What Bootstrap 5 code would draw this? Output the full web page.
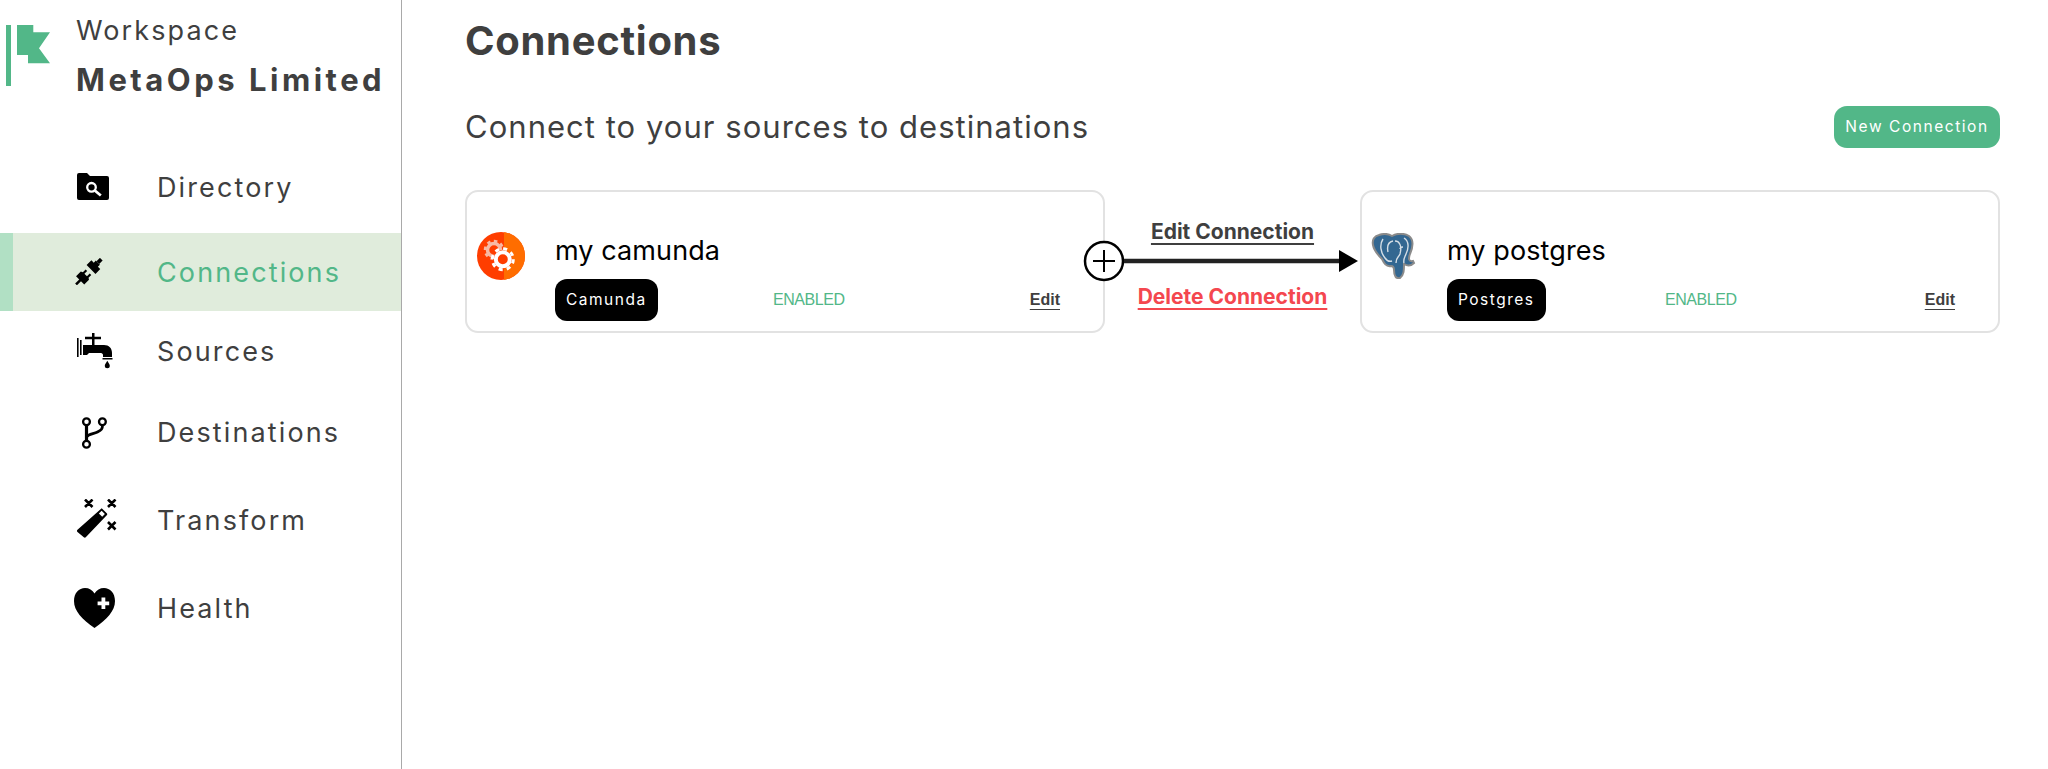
<!DOCTYPE html>
<html lang="en">
<head>
<meta charset="utf-8">
<title>Connections</title>
<link href="https://cdn.jsdelivr.net/npm/bootstrap@5.3.0/dist/css/bootstrap.min.css" rel="stylesheet">
<style>
html,body{height:769px;overflow:hidden;background:#fff}
body{font-family:Inter,"Liberation Sans",sans-serif;color:#3f3f3f}
.shell{height:769px}
.side{width:402px;flex:none;border-right:1px solid #a9a9a9;height:769px}
.brand{height:148px;padding:15px 0 0 6px}
.brand svg{margin-top:10px;flex:none}
.brand-txt{margin-left:26px}
.brand-a{font-size:27px;line-height:32px;letter-spacing:2.1px}
.brand-b{font-size:31px;line-height:37px;margin-top:14px;font-weight:700;letter-spacing:3.5px;white-space:nowrap}
.nav-row{display:flex;align-items:center;height:78px;font-size:27px;letter-spacing:2.12px;padding-left:74px}
.nav-row>span{padding-top:2px}
.ico-box{width:83px;flex:none;display:flex;align-items:center}
.on{background:#e0ecdc;color:#52b788;border-left:13px solid #b1e0c4;padding-left:61px;margin-top:7px}
.r-src{margin-top:1px}
.r-dst{margin-top:3px}
.r-trn{margin-top:10px}
.r-hlt{margin-top:10px}
.i-fold{margin-left:3px;margin-top:-1px}
.i-plug{margin-left:1px;margin-top:-1px}
.i-tap{margin-left:3px}
.i-fork{margin-left:7px;margin-top:1px}
.i-wand{margin-left:2px;margin-top:-3px}
.main{flex:1;padding:0 48px 0 63px;min-width:0}
.h-title{font-size:40px;font-weight:700;line-height:46px;margin:18px 0 0;color:#3f3f3f;letter-spacing:.7px}
.sub-row{margin-top:38px;height:50px}
.sub{font-size:31px;letter-spacing:1.03px;margin:0;line-height:40px}
.new-btn{background:#52b788;border:0;color:#fff;font-size:15.5px;letter-spacing:1.55px;border-radius:13px;height:42px;padding:0 10px;line-height:1;width:166px}
.flow{margin-top:38px;position:relative}
.conn{width:640px;height:143px;border:2px solid #e2e2e2;border-radius:13px;background:#fff;position:relative;flex:none}
.logo{flex:none;margin-top:40px}
.logo-a{margin-left:10px;margin-right:30px}
.logo-b{margin-left:9px;margin-top:41px;margin-right:31px}
.conn-l{flex:1;padding:42px 43px 0 0;min-width:0}
.c-name{font-size:27px;line-height:34px;color:#000;letter-spacing:.1px;margin-bottom:11px}
.tag-col{width:218px;flex:none}
.tag{background:#000;color:#fff;border-radius:12px;font-size:15.5px;letter-spacing:1.5px;height:42px;padding:0 11px;display:inline-flex;align-items:center;line-height:1}
.state{font-family:"Liberation Sans",sans-serif;font-size:16px;color:#52b788;letter-spacing:-.45px}
.ed{font-family:"Liberation Sans",sans-serif;font-weight:700;font-size:16px;color:#3f3f3f;text-decoration:underline;margin-left:auto;text-underline-offset:4px}
.mid{flex:1;position:relative;text-align:center}
.mid a{display:block;font-weight:700;font-size:21px;line-height:24px;text-underline-offset:4px;white-space:nowrap}
.a-edit{color:#3f3f3f;margin-top:30px}
.a-del{color:#f4474f;margin-top:41px}
.arrow-ov{position:absolute;left:-23px;top:49px;width:280px;height:44px}
</style>
</head>
<body>
<div class="shell d-flex">
  <aside class="side">
    <div class="brand d-flex">
      <svg width="44" height="62" viewBox="0 0 44 62"><path fill="#52b788" d="M0 0h5v61H0zM11 0h16.300v7.300H44L33 23.300 44 38.300H22V30H11z"/></svg>
      <div class="brand-txt">
        <div class="brand-a">Workspace</div>
        <div class="brand-b">MetaOps Limited</div>
      </div>
    </div>
    <div class="nav-row">
      <div class="ico-box"><svg class="i-fold" width="32" height="27" viewBox="0 0 32 27"><path d="M2 0h8l3 3h17a2 2 0 0 1 2 2v20a2 2 0 0 1-2 2H2a2 2 0 0 1-2-2V2a2 2 0 0 1 2-2z"/><circle cx="14.500" cy="14.300" r="4.300" fill="none" stroke="#fff" stroke-width="2.300"/><path d="M17.800 17.500l6 5" stroke="#fff" stroke-width="2.800"/></svg></div>
      <span>Directory</span>
    </div>
    <div class="nav-row on">
      <div class="ico-box"><svg class="i-plug" width="28" height="27" viewBox="-14 -14 28 28"><g transform="rotate(-45)"><rect x="-19" y="-1.300" width="7" height="2.600"/><path d="M-13-6h7l1 2h4v2.300h-4V2h4v2.300h-4L-6 6h-7z"/><path d="M3-6.500h7v3.500h3v6h-3v3.500H3z"/><rect x="13" y="-2" width="5" height="4"/></g></svg></div>
      <span>Connections</span>
    </div>
    <div class="nav-row r-src">
      <div class="ico-box"><svg class="i-tap" width="36" height="36" viewBox="0 0 36 36"><path d="M0 5h1.600v19H0zM3 7h1.600v15H3zM6 12h9V6.200H8V3.700h7V0h2.500v3.700H24v2.500h-6.500V12H27c5 0 8 3 8 8v4H26v-2c0-1-1-2-2-2H12l-2 2H6z"/><path d="M25.500 25h10v1.600h-10zM30.300 27.700c1.500 2.500 2.500 3.800 2.500 5a2.500 2.500 0 0 1-5 0c0-1.200 1-2.500 2.500-5z"/></svg></div>
      <span>Sources</span>
    </div>
    <div class="nav-row r-dst">
      <div class="ico-box"><svg class="i-fork" width="27" height="32" viewBox="0 0 27 32" fill="none" stroke="#000" stroke-width="2.300"><circle cx="5.500" cy="4.700" r="3.400"/><circle cx="5.500" cy="27.300" r="3.400"/><circle cx="21.400" cy="4.700" r="3.400"/><path d="M5.500 8v16" stroke-width="3.200"/><path d="M5.500 20c2-3 7-3 11-5 4-2 5-3 5-7" stroke-width="2.800"/></svg></div>
      <span>Destinations</span>
    </div>
    <div class="nav-row r-trn">
      <div class="ico-box"><svg class="i-wand" width="41" height="39" viewBox="0 0 41 39"><path d="M25.700 9.300L31 14.500c.4.500.4 1 0 1.500L10 38c-.7.800-1.500.800-2.200.2L1.500 33c-.7-.7-.7-1.500 0-2.200z"/><path d="M25.600 11.800l3.300 3.200-2.700 2.800-3.300-3.200z" fill="#fff"/><path d="M9 .5l7.500 7.500M16.500.5L9 8M32 .5l7.500 7.500M39.500.5L32 8M32 23l7.500 7.500M39.500 23L32 30.500" stroke="#000" stroke-width="2.600" fill="none"/></svg></div>
      <span>Transform</span>
    </div>
    <div class="nav-row r-hlt">
      <div class="ico-box"><svg width="41" height="40" viewBox="0 0 41 40"><path d="M20.500 40C8 31 0 23 0 13 0 5 5 0 11 0c4 0 7.500 2 9.500 5.500C22.500 2 26 0 30 0c6 0 11 5 11 13 0 10-8 18-20.500 27z"/><path d="M29.400 9.500v11.600M23.600 15.300h11.600" stroke="#fff" stroke-width="3.800"/></svg></div>
      <span>Health</span>
    </div>
  </aside>
  <main class="main">
    <h1 class="h-title">Connections</h1>
    <div class="sub-row d-flex justify-content-between align-items-center">
      <p class="sub">Connect to your sources to destinations</p>
      <button class="btn new-btn" type="button">New Connection</button>
    </div>
    <div class="flow d-flex">
      <div class="conn d-flex">
        <svg class="logo logo-a" width="48" height="48" viewBox="0 0 48 48"><defs><clipPath id="cc"><circle cx="24" cy="24" r="24"/></clipPath></defs><circle cx="24" cy="24" r="24" fill="#ff3d00"/><rect x="27" y="0" width="21" height="48" fill="#ff6d00" clip-path="url(#cc)"/><circle cx="17" cy="18" r="6.500" fill="none" stroke="#f7b9a5" stroke-width="3.500"/><circle cx="17" cy="18" r="9" fill="none" stroke="#f7b9a5" stroke-width="2.500" stroke-dasharray="3.500 3.500"/><circle cx="25.800" cy="27.300" r="9.500" fill="#ff3d00"/><circle cx="25.800" cy="27.300" r="7" fill="none" stroke="#fff" stroke-width="4"/><circle cx="25.800" cy="27.300" r="10.500" fill="none" stroke="#fff" stroke-width="3" stroke-dasharray="4.100 4.150"/></svg>
        <div class="conn-l">
          <div class="c-name">my camunda</div>
          <div class="d-flex align-items-center">
            <div class="tag-col"><span class="tag">Camunda</span></div>
            <span class="state">ENABLED</span>
            <a class="ed" href="#">Edit</a>
          </div>
        </div>
      </div>
      <div class="mid">
        <svg class="arrow-ov" viewBox="0 0 280 44"><circle cx="22" cy="22" r="19" fill="#fff" stroke="#000" stroke-width="2.500"/><path d="M11 22h22M22 11v22" stroke="#000" stroke-width="2"/><path d="M42 22h218" stroke="#222" stroke-width="4.500"/><path d="M257 11l19 11-19 11z"/></svg>
        <a class="a-edit" href="#">Edit Connection</a>
        <a class="a-del" href="#">Delete Connection</a>
      </div>
      <div class="conn d-flex">
        <svg class="logo logo-b" width="45" height="46" viewBox="0 0 45 46"><path fill="#336791" stroke="#8a8a8a" stroke-width="2" d="M8 2c6-2 10-1 13 1 5-3 12-3 17 0 5 4 4 11 1 18-2 5-1 8 3 7l1 2c-3 3-7 3-10 1 0 6 0 11-4 14-4 1-6-2-6-8 0-3-1-4-3-4-5 1-7-3-9-7-4-4-8-8-9-14C1 7 3 3 8 2z"/><path fill="none" stroke="#d5dee6" stroke-width="1.400" d="M12 6c-4 6-2 14 2 19 2 3 4 4 7 3M22 8c-5 1-6 6-5 11M24 8c5 0 7 6 5 13-1 3-4 3-4 9M33 5c5 3 5 10 2 16-1 3-3 5-2 9M32 14c-2 0-3 1-3 2"/></svg>
        <div class="conn-l">
          <div class="c-name">my postgres</div>
          <div class="d-flex align-items-center">
            <div class="tag-col"><span class="tag">Postgres</span></div>
            <span class="state">ENABLED</span>
            <a class="ed" href="#">Edit</a>
          </div>
        </div>
      </div>
    </div>
  </main>
</div>
</body>
</html>
